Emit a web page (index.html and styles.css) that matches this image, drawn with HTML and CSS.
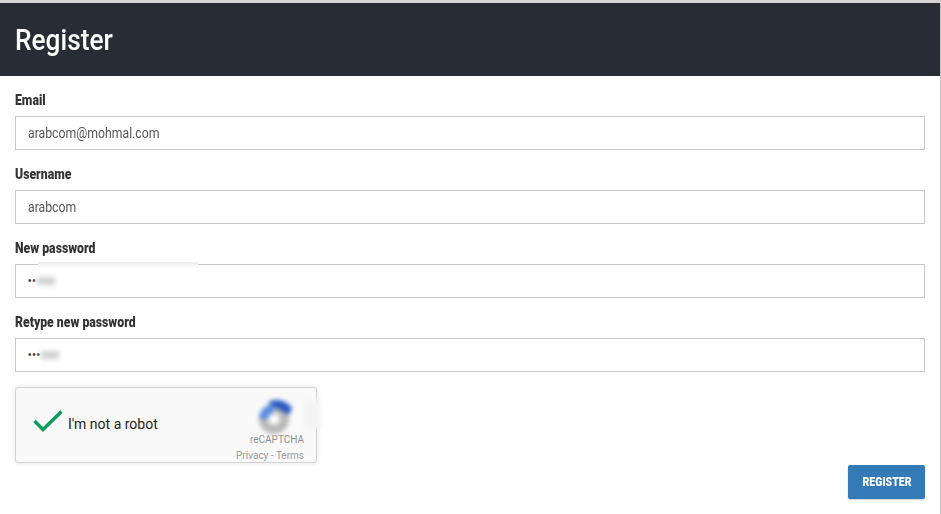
FILE: index.html
```html
<!DOCTYPE html>
<html lang="en">
<head>
<meta charset="utf-8">
<title>Register</title>
<link rel="stylesheet" href="styles.css">
</head>
<body>
<main class="panel">
  <header class="head"><h1 class="title cond">Register</h1></header>
  <form class="form">
    <div class="field">
      <label class="label"><span class="cond">Email</span></label>
      <div class="input"><span class="cond">arabcom@mohmal.com</span></div>
    </div>
    <div class="field">
      <label class="label"><span class="cond">Username</span></label>
      <div class="input"><span class="cond">arabcom</span></div>
    </div>
    <div class="field">
      <label class="label"><span class="cond">New password</span></label>
      <div class="input">
        <span class="streak"></span>
        <span class="dots">••</span><span class="smear"></span>
      </div>
    </div>
    <div class="field">
      <label class="label"><span class="cond">Retype new password</span></label>
      <div class="input">
        <span class="dots">•••</span><span class="smear"></span>
      </div>
    </div>
    <div class="captcha">
      <svg class="check" width="30" height="22" viewBox="0 0 30 22"><path d="M1.500 11L10 19.500L28.500 1.500" fill="none" stroke="#0f9d58" stroke-width="3.400"/></svg>
      <span class="robot">I'm not a robot</span>
      <div class="brand">
        <div class="logo-wrap">
          <svg class="logo" width="44" height="36" viewBox="0 0 44 36">
            <circle cx="20" cy="21" r="10.500" fill="none" stroke="#b8b8b8" stroke-width="9"/>
            <path d="M9.500 21A10.500 10.500 0 0 1 20 10.500" fill="none" stroke="#5a8ee2" stroke-width="9"/>
            <path d="M14 4C22 0 32 2 38 10L35 17L22 10Z" fill="#2b5bc0"/>
          </svg>
          <span class="logo-fade"></span>
        </div>
        <div class="brand-name">reCAPTCHA</div>
        <div class="brand-links">Privacy - Terms</div>
      </div>
    </div>
    <div class="actions"><button class="btn" type="button"><span class="cond-btn">REGISTER</span></button></div>
  </form>
</main>
</body>
</html>
```

FILE: styles.css
```css
* { box-sizing: border-box; }
html, body { margin: 0; height: 100%; background: #fff; }
body { overflow: hidden; }
.panel {
  width: 941px;
  height: 514px;
  border-top: 3px solid #d4d4d4;
  border-right: 1px solid #c4c4c4;
  font-family: Roboto, "Liberation Sans", sans-serif;
}
.cond {
  display: inline-block;
  white-space: nowrap;
  transform: scaleX(.875);
  transform-origin: left center;
}
.cond-btn {
  display: inline-block;
  white-space: nowrap;
  transform: scaleX(.875);
  transform-origin: center;
}
.head {
  height: 73px;
  background: #272c35;
  padding: 0 15px;
  display: flex;
  align-items: center;
}
.title {
  margin: 0;
  color: #fff;
  font-size: 30px;
  font-weight: 500;
  line-height: 36px;
}
.form { padding: 15px 15px 0; }
.field { margin-bottom: 15px; }
.label {
  display: block;
  height: 25px;
  line-height: 19px;
  font-size: 14px;
  font-weight: 900;
  color: #333;
}
.input {
  position: relative;
  height: 34px;
  width: 910px;
  border: 1px solid #c8c8c8;
  padding: 0 12px;
  font-size: 14px;
  line-height: 32px;
  color: #555;
  display: flex;
  align-items: center;
}
.dots { font-size: 10px; color: #444; letter-spacing: .8px; font-family: "Liberation Sans", sans-serif; }
.smear {
  width: 18px;
  height: 8px;
  background: #d0d0d0;
  filter: blur(2.500px);
}
.streak {
  position: absolute;
  left: 22px;
  top: -3px;
  width: 160px;
  height: 5px;
  background: linear-gradient(#ececec, #fafafa);
}
.captcha {
  position: relative;
  width: 302px;
  height: 76px;
  margin-top: 15px;
  background: #f9f9f9;
  border: 1px solid #d3d3d3;
  border-radius: 3px;
  box-shadow: 0 0 4px 1px rgba(0,0,0,.08);
  display: flex;
  align-items: center;
}
.check { margin: 0 0 9px 17px; flex: none; }
.robot { margin: 0 0 2px 5px; font-size: 14px; color: #222; }
.brand {
  position: absolute;
  right: 12px;
  top: 8px;
  bottom: 0;
  width: 90px;
  text-align: right;
  font-size: 10px;
  color: #8f8f8f;
}
.logo-wrap { position: relative; height: 38px; }
.logo {
  position: absolute;
  left: 40px;
  top: 2px;
  filter: blur(2px);
}
.logo-fade {
  position: absolute;
  left: 91px;
  top: 4px;
  width: 16px;
  height: 28px;
  background: #f3f3f3;
  filter: blur(2px);
}
.brand-name { line-height: 12px; }
.brand-links { line-height: 12px; margin-top: 4px; white-space: nowrap; color: #999; }
.actions { display: flex; justify-content: flex-end; margin-top: 2px; }
.btn {
  width: 77px;
  height: 34px;
  border: 0;
  border-radius: 2px;
  background: #337ab7;
  color: #fff;
  font-family: Roboto, "Liberation Sans", sans-serif;
  font-size: 12px;
  font-weight: 900;
  box-shadow: 0 1px 2px rgba(0,0,0,.2);
  padding: 0;
}
```
